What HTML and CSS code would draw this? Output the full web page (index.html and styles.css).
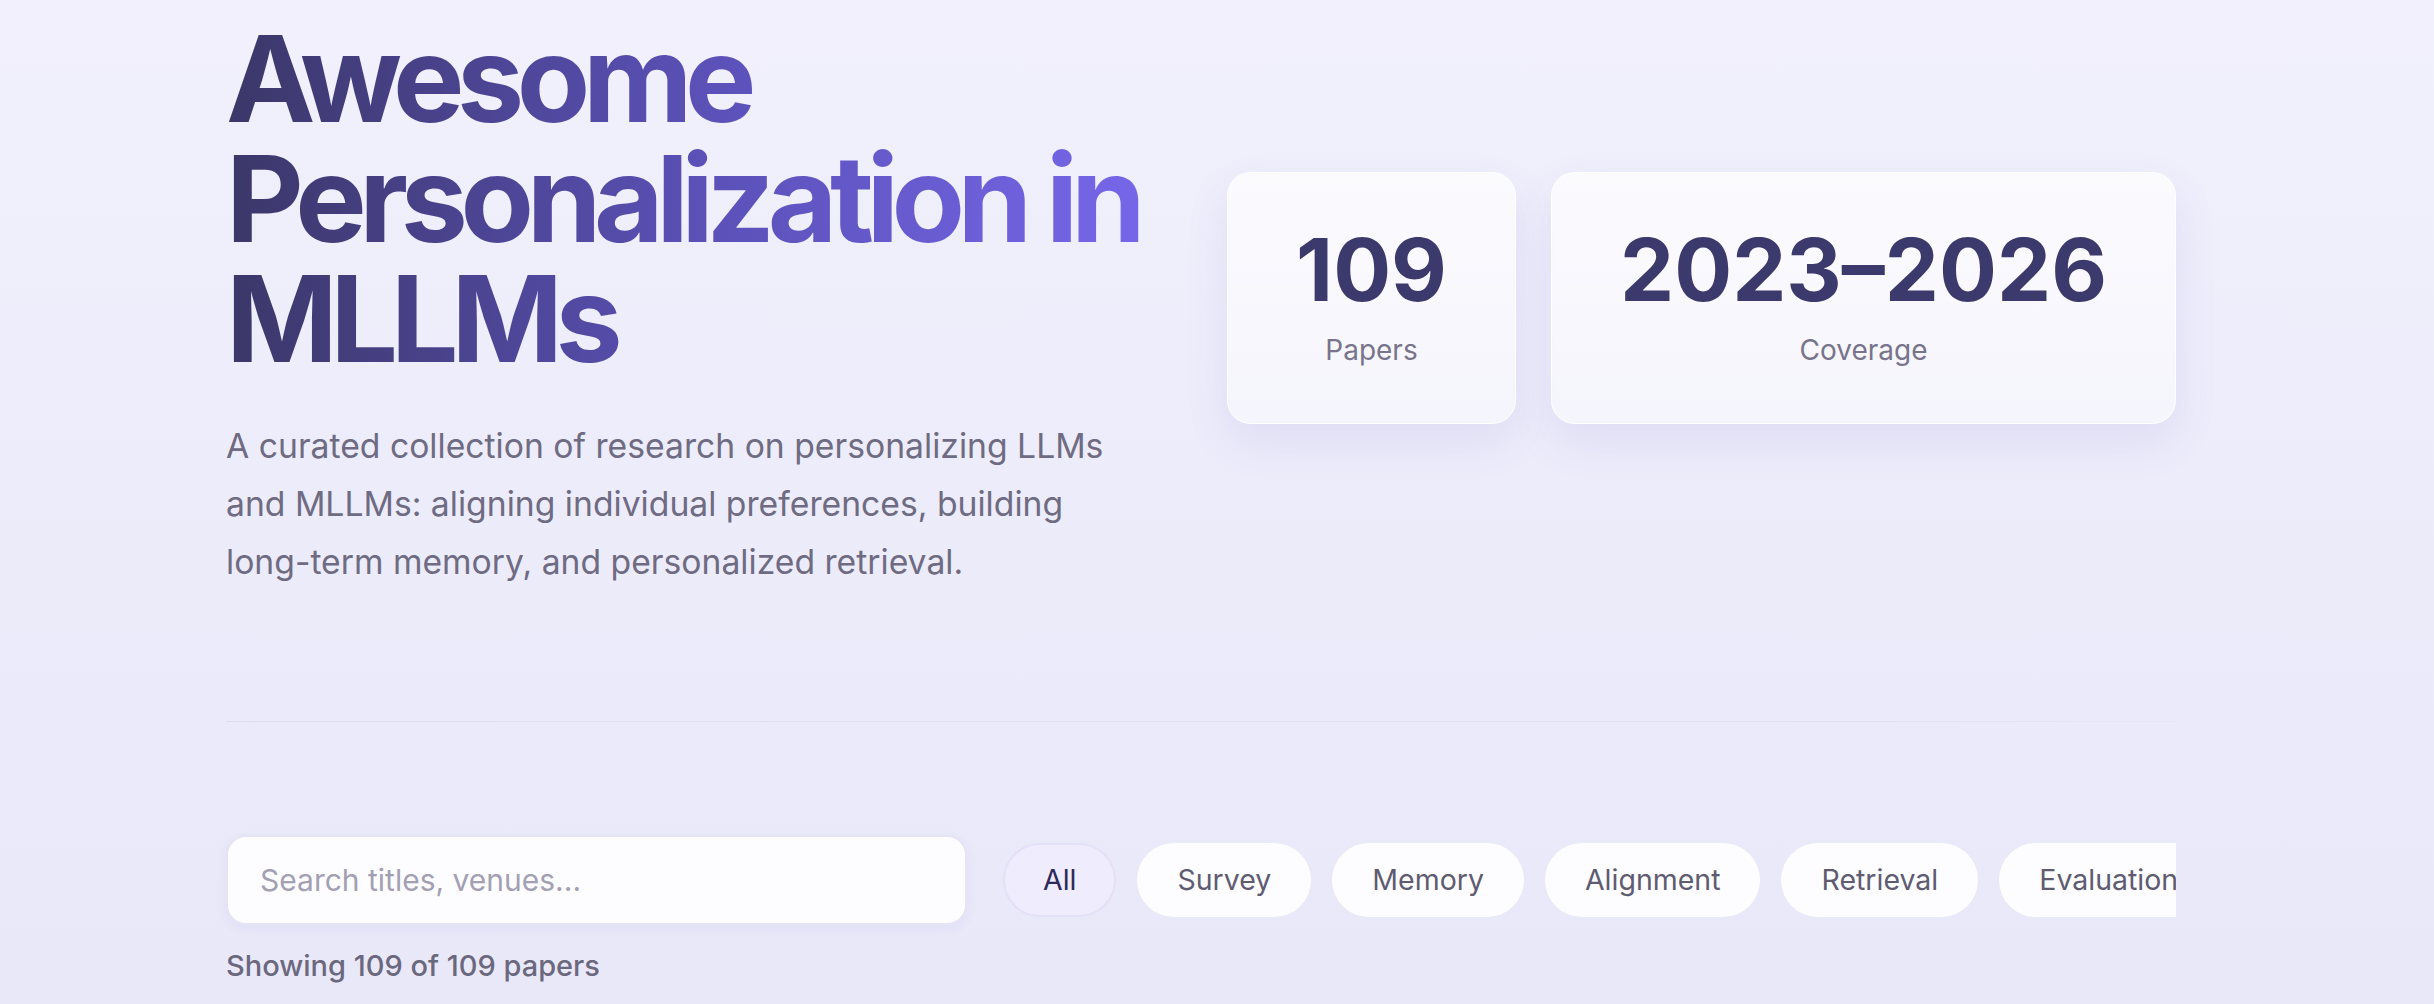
FILE: index.html
```html
<!DOCTYPE html>
<html lang="en">

<head>
    <meta charset="UTF-8">
    <meta name="viewport" content="width=device-width, initial-scale=1.0">
    <title>Awesome Personalization in MLLMs</title>
    <link rel="stylesheet" href="styles.css">
</head>

<body>
    <div class="page">
        <header class="hero">
            <div class="hero-text">
                <h1 class="title">Awesome Personalization in MLLMs</h1>
                <p class="subtitle">A curated collection of research on personalizing LLMs and MLLMs: aligning individual preferences, building long-term memory, and personalized retrieval.</p>
            </div>
            <div class="stats">
                <div class="stat-card">
                    <div class="stat-value">109</div>
                    <div class="stat-label">Papers</div>
                </div>
                <div class="stat-card">
                    <div class="stat-value">2023–2026</div>
                    <div class="stat-label">Coverage</div>
                </div>
            </div>
        </header>

        <div class="divider"></div>

        <section class="toolbar">
            <input class="search" type="text" placeholder="Search titles, venues...">
            <div class="filters">
                <button class="chip chip-active">All</button>
                <button class="chip">Survey</button>
                <button class="chip">Memory</button>
                <button class="chip">Alignment</button>
                <button class="chip">Retrieval</button>
                <button class="chip">Evaluation</button>
                <button class="chip">Benchmark</button>
            </div>
        </section>

        <p class="count">Showing 109 of 109 papers</p>
    </div>
</body>

</html>
```

FILE: styles.css
```css
html,
body {
    margin: 0;
    height: 100%;
}

body {
    font-family: Inter, "Noto Sans", sans-serif;
    background: linear-gradient(180deg, #f1f0fc 0%, #ecebfa 60%, #e9e8f9 100%);
    overflow: hidden
}

.page {
    width: 1950px;
    padding-left: 226px
}

/* hero */
.hero {
    display: flex;
    align-items: center;
    justify-content: space-between;
    padding-top: 19px
}

.hero-text {
    max-width: 940px
}

.title {
    margin: 0;
    font-size: 120px;
    line-height: 1;
    font-weight: 700;
    letter-spacing: -0.062em;
    background: linear-gradient(90deg, #3b3768 0%, #5a50b6 50%, #7768ec 100%);
    -webkit-background-clip: text;
    background-clip: text;
    color: transparent;
    width: fit-content
}

.subtitle {
    margin: 38px 0 0;
    max-width: 900px;
    font-size: 33.7px;
    line-height: 1.72;
    color: #6e6b82
}

.stats {
    display: flex;
    gap: 35px;
    margin-bottom: 14px
}

.stat-card {
    padding: 54px 68px 52px;
    border-radius: 24px;
    text-align: center;
    background: linear-gradient(180deg, rgba(255, 255, 255, .72) 0%, rgba(255, 255, 255, .45) 100%);
    border: 1px solid rgba(255, 255, 255, .8);
    box-shadow: 0 18px 44px rgba(90, 80, 190, .10)
}

.stat-value {
    font-size: 86px;
    line-height: 1;
    font-weight: 700;
    color: #3c396c
}

.stat-label {
    margin-top: 18px;
    font-size: 28px;
    line-height: 1.4;
    color: #77748b
}

.divider {
    margin-top: 130px;
    height: 1px;
    background: linear-gradient(90deg, rgba(205, 195, 215, .35), rgba(205, 195, 215, .3) 80%, rgba(205, 195, 215, .1))
}

/* toolbar */
.toolbar {
    display: flex;
    align-items: center;
    margin-top: 113px
}

.search {
    box-sizing: border-box;
    width: 741px;
    height: 90px;
    flex-shrink: 0;
    padding: 0 32px;
    border: 2px solid #e6e3f6;
    border-radius: 20px;
    background: #fdfdff;
    font-family: inherit;
    font-size: 30px;
    color: #3c396c;
    outline: none;
    box-shadow: 0 4px 12px rgba(90, 80, 190, .06)
}

.search::placeholder {
    color: #a3a0b3
}

.filters {
    flex: 1;
    display: flex;
    gap: 21px;
    margin-left: 36px;
    overflow: hidden
}

.chip {
    flex-shrink: 0;
    height: 74px;
    padding: 0 38px;
    border: 2px solid transparent;
    border-radius: 37px;
    background: #fdfdff;
    font-family: inherit;
    font-size: 28.5px;
    font-weight: 400;
    color: #5f5c72;
    cursor: pointer
}

.chip-active {
    background: #efecfd;
    border-color: #e4e0f7;
    color: #2d2a5a
}

.count {
    margin: 19px 0 0;
    font-size: 29px;
    line-height: 1.5;
    font-weight: 500;
    color: #6b687e
}
```
